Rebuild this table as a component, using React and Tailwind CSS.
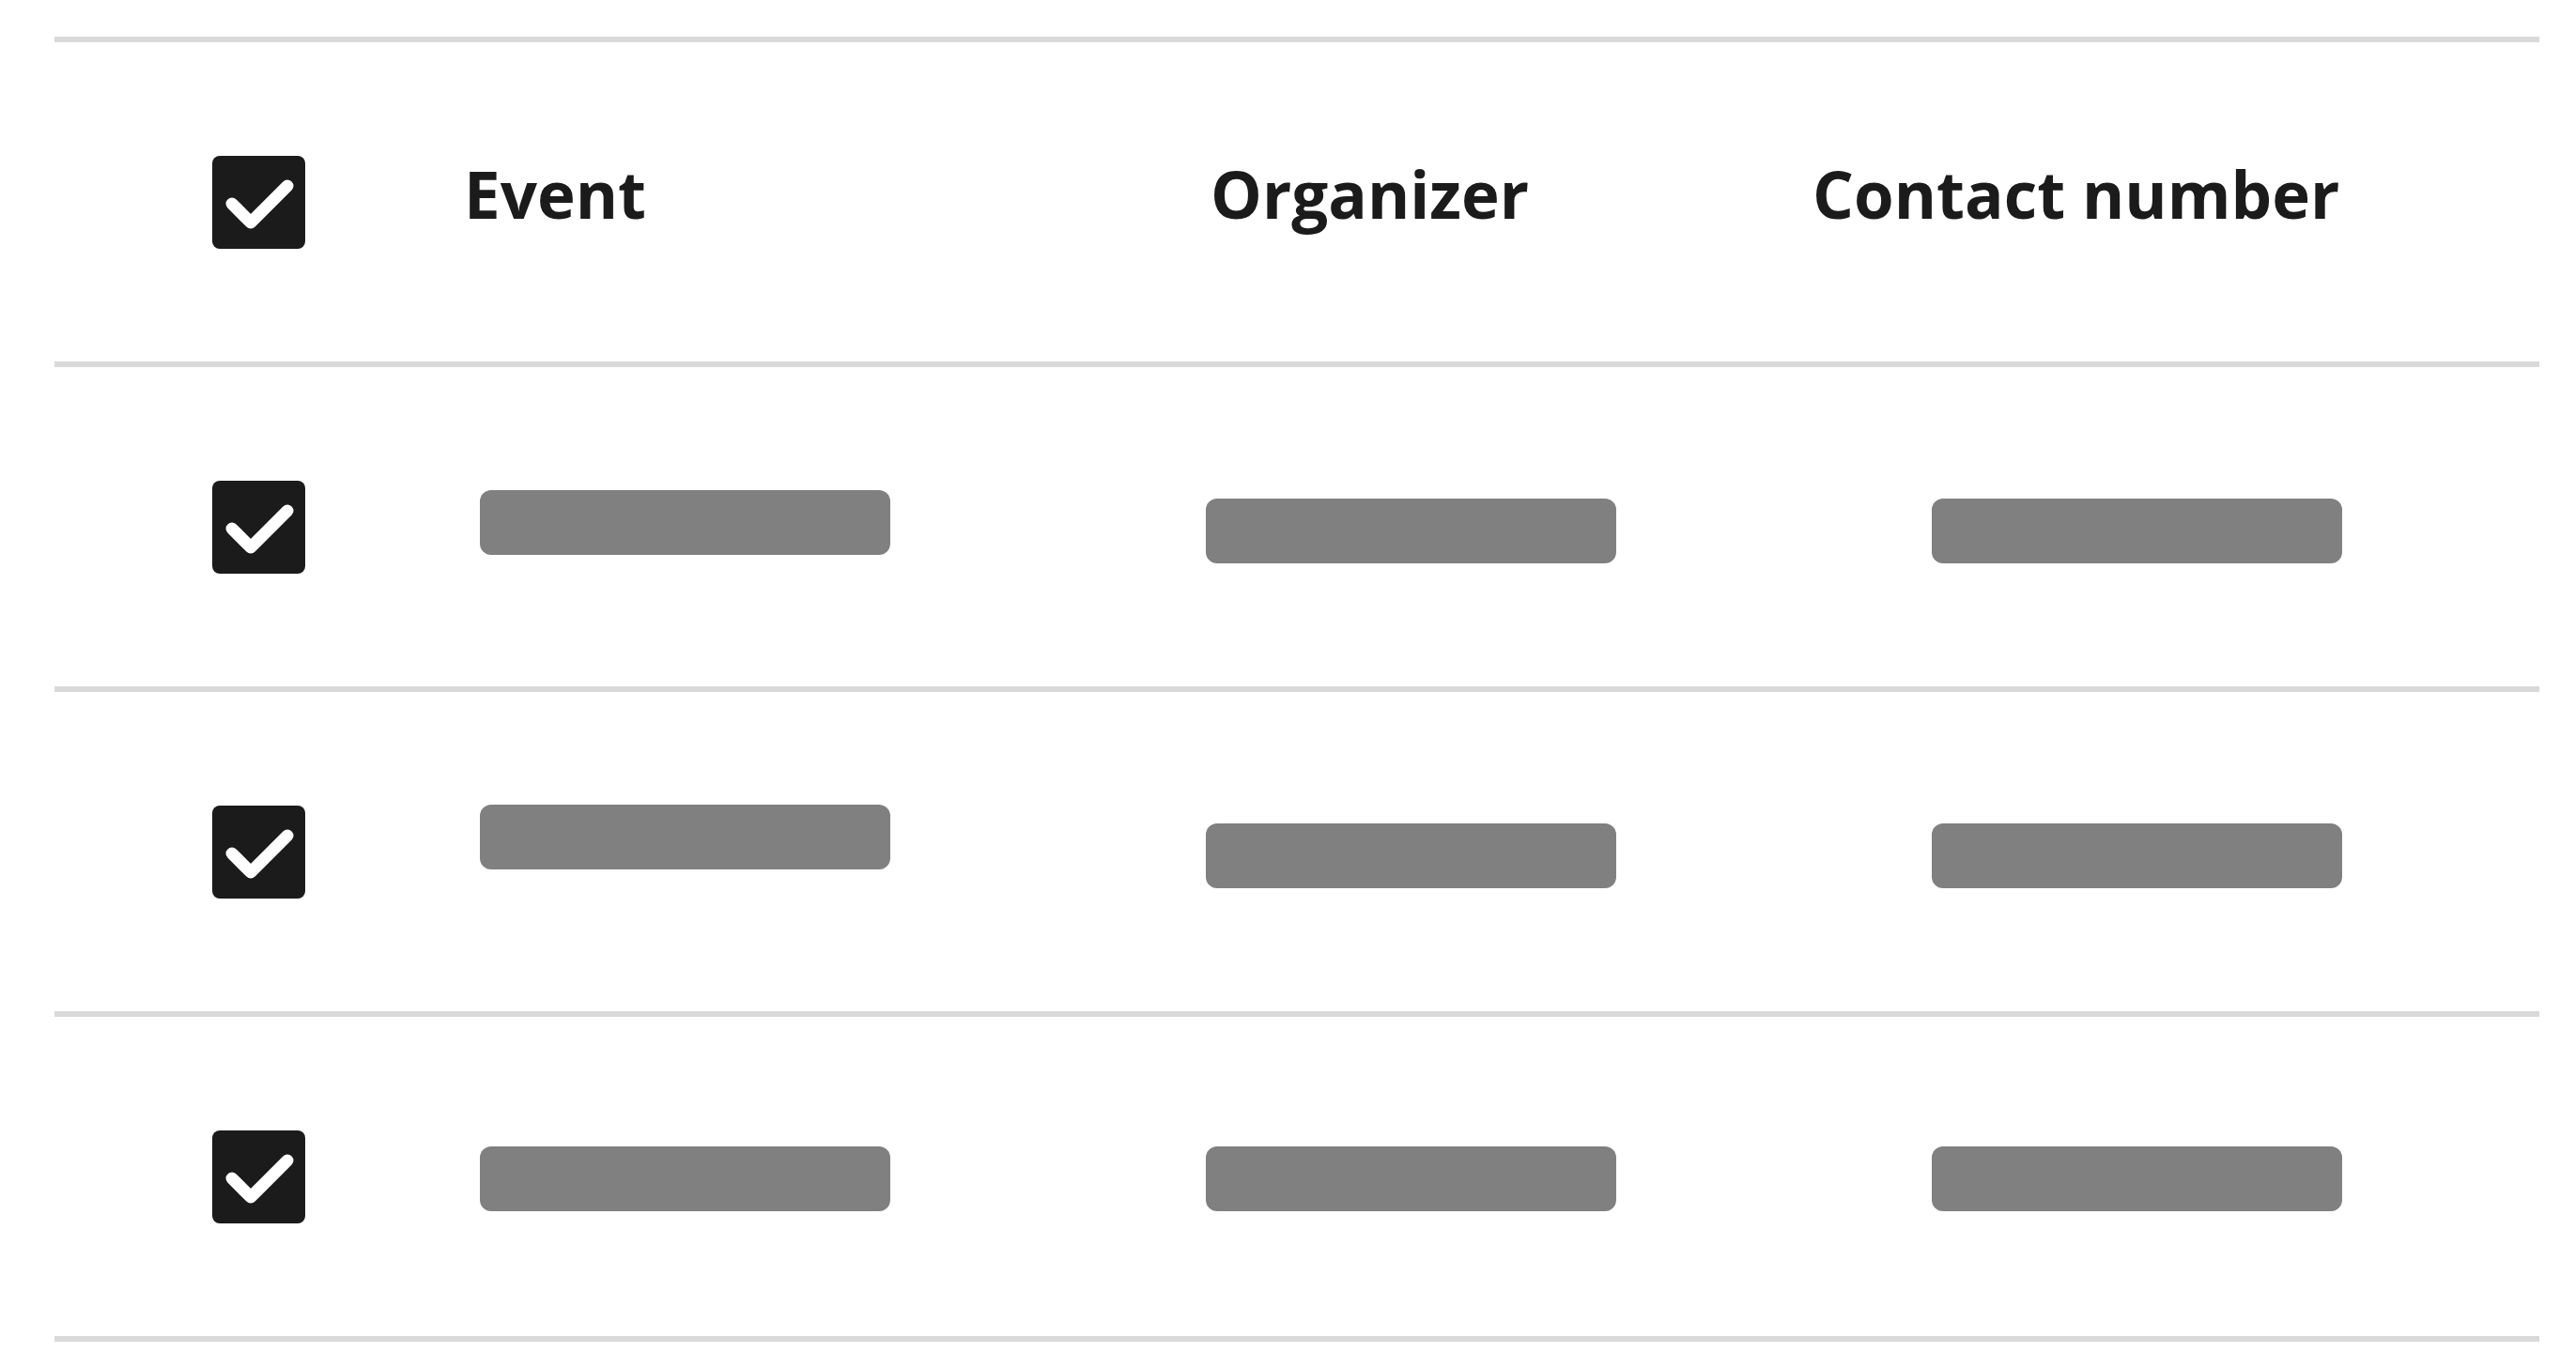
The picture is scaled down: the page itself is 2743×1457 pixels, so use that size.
import React from 'react';

// Checked checkbox drawn as a dark rounded square with a white tick
const CheckBox = () => (
  <div className="w-[99px] h-[99px] rounded-[8px] bg-[#1b1b1b] flex-shrink-0">
    <svg width="99" height="99" viewBox="0 0 99 99">
      <path
        d="M21 51 L41 71 L80 32"
        fill="none"
        stroke="#ffffff"
        strokeWidth="13"
        strokeLinecap="round"
        strokeLinejoin="round"
      />
    </svg>
  </div>
);

const Bar = ({ className = '' }) => (
  <div className={`h-[69px] w-[437px] rounded-[12px] bg-[#808080] self-start ${className}`} />
);

const rows = [
  { event: 'mt-[131px]', other: 'mt-[140px]' },
  { event: 'mt-[120px]', other: 'mt-[140px]' },
  { event: 'mt-[138px]', other: 'mt-[138px]' },
];

export default function App() {
  return (
    <div className="min-h-screen bg-white pt-[39px] font-['Open_Sans',sans-serif] text-[#1b1b1b]">
      <div className="ml-[58px] w-[2646px] border-t-[6px] border-[#d9d9d9]">
        {/* Header */}
        <div className="flex h-[346px] border-b-[6px] border-[#d9d9d9]">
          <div className="w-[435px] flex items-center">
            <div className="ml-[168px]">
              <CheckBox />
            </div>
          </div>
          <div className="w-[791px] flex">
            <span className="mt-[127px] ml-[1px] text-[69px] font-bold leading-none">Event</span>
          </div>
          <div className="w-[646px] flex">
            <span className="mt-[127px] ml-[5px] text-[69px] font-bold leading-none">Organizer</span>
          </div>
          <div className="flex-1 flex">
            <span className="mt-[127px] text-[69px] font-bold leading-none whitespace-nowrap">Contact number</span>
          </div>
        </div>

        {/* Placeholder rows */}
        {rows.map((r, i) => (
          <div key={i} className="flex h-[346px] border-b-[6px] border-[#d9d9d9]">
            <div className="w-[435px] flex items-center">
              <div className="ml-[168px]">
                <CheckBox />
              </div>
            </div>
            <div className="w-[791px] flex">
              <Bar className={`ml-[18px] ${r.event}`} />
            </div>
            <div className="w-[646px] flex">
              <Bar className={r.other} />
            </div>
            <div className="flex-1 flex">
              <Bar className={`ml-[127px] ${r.other}`} />
            </div>
          </div>
        ))}
      </div>
    </div>
  );
}
